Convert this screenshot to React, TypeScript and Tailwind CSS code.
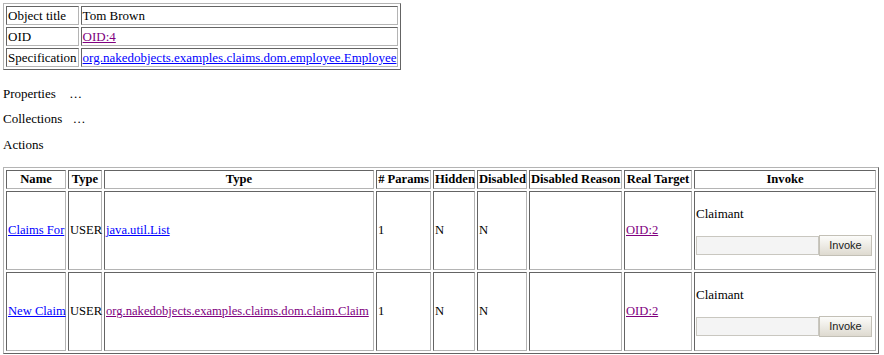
const serif = "font-['Liberation_Serif','Times_New_Roman',serif]";

const outer = 'border border-solid border-t-[#b4b4b4] border-l-[#b4b4b4] border-r-[#646464] border-b-[#646464]';
const cell = 'border border-solid border-t-[#646464] border-l-[#646464] border-r-[#b4b4b4] border-b-[#b4b4b4] p-px';

const link = 'text-[#0000ff] underline';
const visited = 'text-[#800080] underline';

const headers: { label: string; w: string }[] = [
  { label: 'Name', w: 'w-[60px]' },
  { label: 'Type', w: 'w-[34px]' },
  { label: 'Type', w: 'w-[270px]' },
  { label: '# Params', w: 'w-[55px]' },
  { label: 'Hidden', w: 'w-[42px]' },
  { label: 'Disabled', w: 'w-[50px]' },
  { label: 'Disabled Reason', w: 'w-[93px]' },
  { label: 'Real Target', w: 'w-[68px]' },
  { label: 'Invoke', w: 'w-[182px]' },
];

const actions = [
  { name: 'Claims For', type: 'java.util.List', typeVisited: false },
  { name: 'New Claim', type: 'org.nakedobjects.examples.claims.dom.claim.Claim', typeVisited: true },
];

function InvokeForm() {
  return (
    <div className="pt-[13px] pb-[12px]">
      <div className="leading-[15px]">Claimant</div>
      <div className="mt-[14px] flex items-center">
        <input
          type="text"
          className="w-[123px] h-[19px] bg-[#f4f4f4] border border-solid border-[#c9c7c0] outline-none"
        />
        <button className="w-[53px] h-[21px] border border-solid border-[#c3c0b6] bg-gradient-to-b from-[#fcfcfa] to-[#dedad0] text-[11px] text-[#1a1a1a] font-['Liberation_Sans',Arial,sans-serif]">
          Invoke
        </button>
      </div>
    </div>
  );
}

export default function App() {
  return (
    <div className={`${serif} text-[13px] leading-[15px] text-black bg-white w-[884px] h-[355px] pt-[3px] pl-[3px] overflow-hidden`}>
      <table className={`${outer} border-separate border-spacing-[2px]`}>
        <tbody>
          <tr>
            <td className={cell}>Object title</td>
            <td className={cell}>Tom Brown</td>
          </tr>
          <tr>
            <td className={cell}>OID</td>
            <td className={cell}>
              <a className={visited}>OID:4</a>
            </td>
          </tr>
          <tr>
            <td className={cell}>Specification</td>
            <td className={cell}>
              <a className={link}>org.nakedobjects.examples.claims.dom.employee.Employee</a>
            </td>
          </tr>
        </tbody>
      </table>

      <div className="mt-[16px]">
        Properties<span className="ml-[14px] tracking-[1px]">...</span>
      </div>
      <div className="mt-[10px]">
        Collections<span className="ml-[11px] tracking-[1px]">...</span>
      </div>
      <div className="mt-[11px]">Actions</div>

      <table className={`${outer} mt-[15px] border-separate border-spacing-[2px] table-fixed w-[876px] text-[12.6px]`}>
        <thead>
          <tr>
            {headers.map((h, i) => (
              <th key={i} className={`${cell} ${h.w} font-bold text-center whitespace-nowrap text-[12.6px]`}>
                {h.label}
              </th>
            ))}
          </tr>
        </thead>
        <tbody>
          {actions.map((a) => (
            <tr key={a.name}>
              <td className={`${cell} align-middle whitespace-nowrap`}>
                <a className={link}>{a.name}</a>
              </td>
              <td className={`${cell} align-middle`}>USER</td>
              <td className={`${cell} align-middle whitespace-nowrap`}>
                <a className={a.typeVisited ? visited : link}>{a.type}</a>
              </td>
              <td className={`${cell} align-middle`}>1</td>
              <td className={`${cell} align-middle`}>N</td>
              <td className={`${cell} align-middle`}>N</td>
              <td className={`${cell} align-middle`}></td>
              <td className={`${cell} align-middle`}>
                <a className={visited}>OID:2</a>
              </td>
              <td className={`${cell} align-middle text-[13px]`}>
                <InvokeForm />
              </td>
            </tr>
          ))}
        </tbody>
      </table>
    </div>
  );
}
